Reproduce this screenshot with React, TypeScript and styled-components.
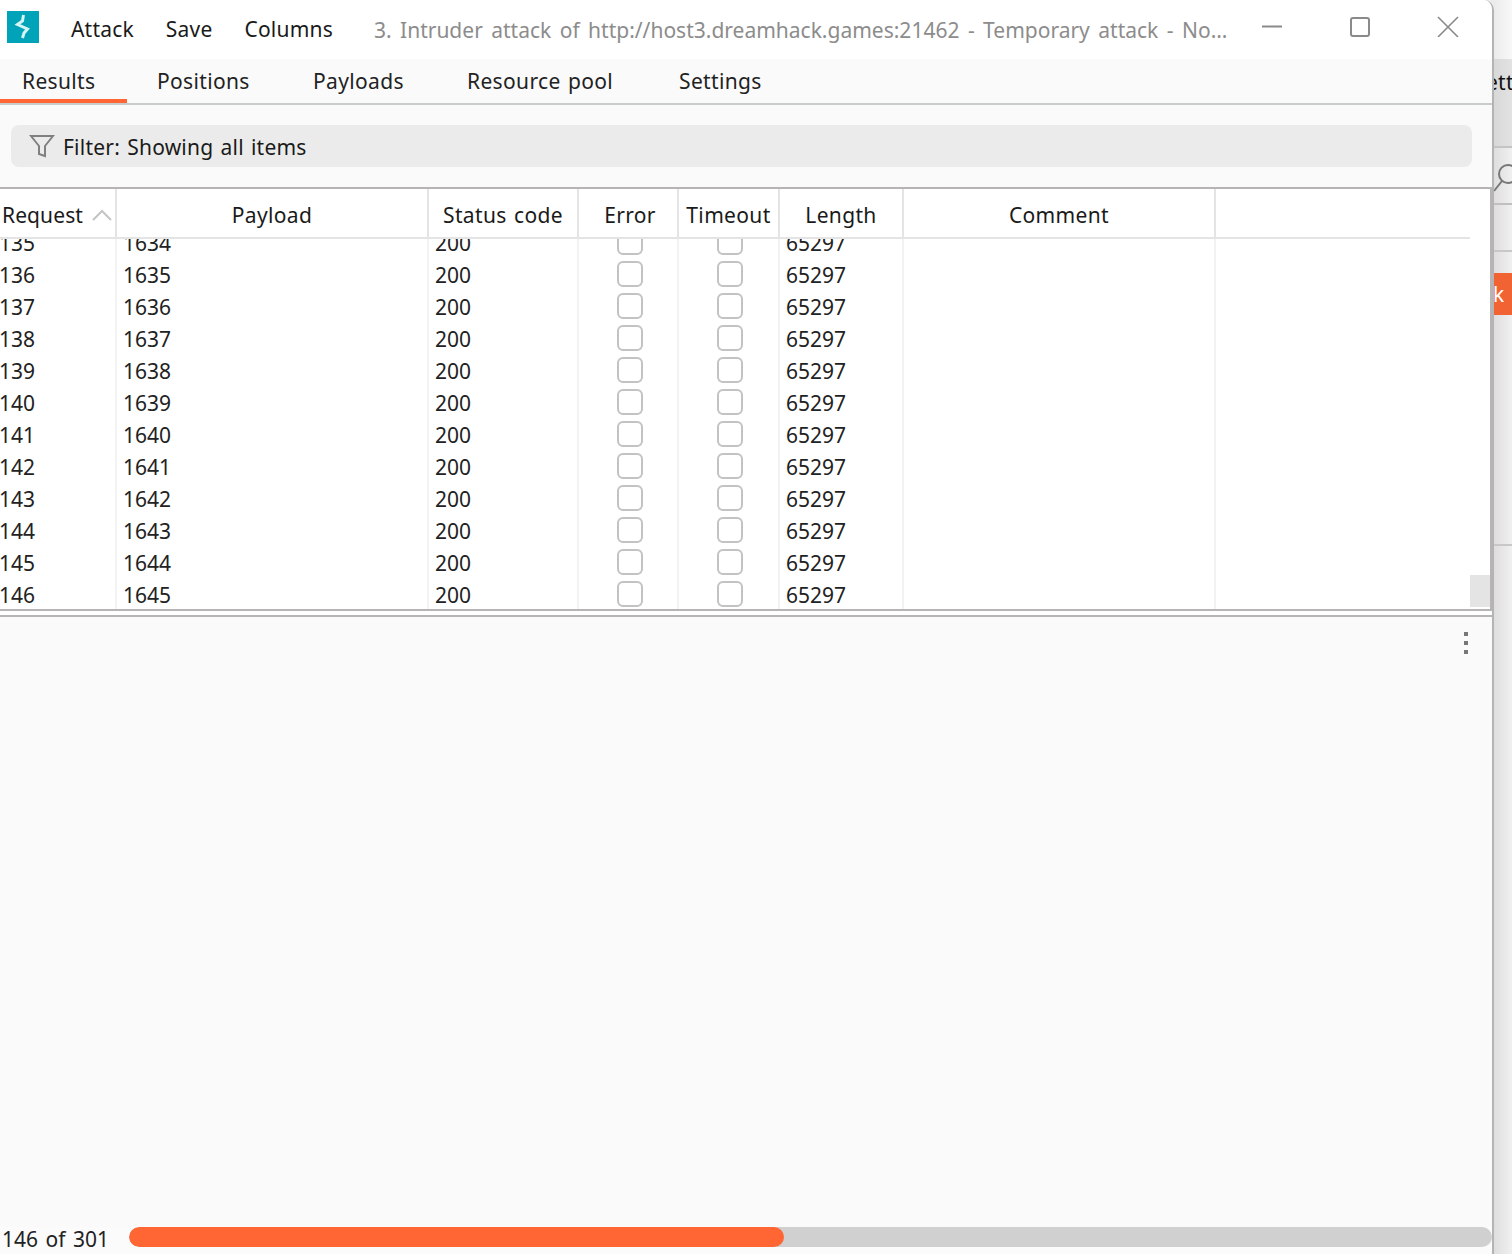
import React from "react";
import styled, { createGlobalStyle } from "styled-components";

const Global = createGlobalStyle`
  html, body { margin: 0; padding: 0; height: 100%; background: #ececec; }
  #root { height: 100%; }
  * { box-sizing: border-box; }
`;

const Page = styled.div`
  width: 1512px;
  height: 1254px;
  overflow: hidden;
  display: flex;
  font-family: "Noto Sans", "Noto Sans CJK KR", sans-serif;
  font-size: 21px;
  letter-spacing: 0.35px;
  word-spacing: 1.5px;
  color: #1a1a1a;
`;

const Win = styled.div`
  width: 1494px;
  height: 1254px;
  flex: none;
  display: flex;
  flex-direction: column;
  background: #fafafa;
  border-right: 2px solid #b4b4b4;
  border-top-right-radius: 10px;
  overflow: hidden;
`;

const TitleBar = styled.div`
  height: 59px;
  flex: none;
  background: #fff;
  display: flex;
  align-items: center;
`;

const Logo = styled.svg`
  width: 32px;
  height: 32px;
  margin: 0 0 5px 7px;
  flex: none;
`;

const MenuItem = styled.span<{ $ml: number }>`
  margin-left: ${(p) => p.$ml}px;
  flex: none;
  line-height: 59px;
  letter-spacing: 0.2px;
`;

const Title = styled.span`
  margin-left: 41px;
  width: 855px;
  flex: none;
  color: #8c8c8c;
  letter-spacing: 0;
  word-spacing: 3px;
  white-space: nowrap;
  overflow: hidden;
  text-overflow: ellipsis;
`;

const WinBtn = styled.svg<{ $ml: number }>`
  width: 24px;
  height: 24px;
  flex: none;
  margin-left: ${(p) => p.$ml}px;
  margin-bottom: 10px;
`;

const Tabs = styled.div`
  height: 46px;
  flex: none;
  display: flex;
  background: #fafafa;
  border-bottom: 2px solid #c8cccc;
`;

const Tab = styled.div<{ $w: number; $pl: number; $active?: boolean }>`
  width: ${(p) => p.$w}px;
  height: 44px;
  flex: none;
  padding-left: ${(p) => p.$pl}px;
  line-height: 44px;
  color: #222;
  border-bottom: 4px solid ${(p) => (p.$active ? "#ff6633" : "transparent")};
`;

const FilterArea = styled.div`
  height: 82px;
  flex: none;
  padding: 20px 20px 0 11px;
`;

const Filter = styled.div`
  height: 42px;
  background: #ebebeb;
  border-radius: 8px;
  display: flex;
  align-items: center;
  padding-left: 18px;
  gap: 8px;
  letter-spacing: 0.22px;
`;

const FilterText = styled.span`
  padding-top: 2px;
`;

const TableWrap = styled.div`
  height: 424px;
  flex: none;
  background: #fff;
  border-top: 2px solid #b8b4b4;
  border-bottom: 2px solid #b8b4b4;
  border-right: 2px solid #b8b4b4;
  display: flex;
  flex-direction: column;
  overflow: hidden;
`;

const HeadRow = styled.div`
  height: 50px;
  flex: none;
  display: flex;
  width: 1470px;
  border-bottom: 2px solid #e4e4e4;
`;

const HeadCell = styled.div<{ $w: number; $pl?: number }>`
  width: ${(p) => p.$w}px;
  flex: none;
  border-right: 2px solid #e4e4e4;
  display: flex;
  align-items: center;
  justify-content: center;
  white-space: nowrap;
  padding-top: 4px;
  padding-left: ${(p) => p.$pl ?? 0}px;
`;

const HeadLeft = styled(HeadCell)`
  justify-content: flex-start;
  padding-left: 2px;
  gap: 9px;
  letter-spacing: 0.1px;
`;

const Body = styled.div`
  flex: 1;
  display: flex;
  overflow: hidden;
`;

const RowList = styled.div`
  width: 1470px;
  flex: none;
  margin-top: -12px;
`;

const Row = styled.div`
  height: 32px;
  display: flex;
`;

const Cell = styled.div<{ $w: number; $pl: number; $last?: boolean }>`
  width: ${(p) => p.$w}px;
  flex: none;
  padding-left: ${(p) => p.$pl}px;
  line-height: 32px;
  letter-spacing: 0;
  border-right: 2px solid ${(p) => (p.$last ? "transparent" : "#f2f2f2")};
  color: #222;
`;

const FirstCell = styled(Cell)`
  text-indent: -1px;
`;

const BoxCell = styled.div<{ $w: number; $pl: number }>`
  width: ${(p) => p.$w}px;
  flex: none;
  display: flex;
  align-items: center;
  justify-content: center;
  padding: 0 0 2px ${(p) => p.$pl}px;
  border-right: 2px solid #f2f2f2;
`;

const Check = styled.div`
  width: 26px;
  height: 26px;
  border: 2px solid #c2c2c2;
  border-radius: 6px;
  background: #fff;
`;

const Scroll = styled.div`
  width: 20px;
  flex: none;
  display: flex;
  flex-direction: column;
  justify-content: flex-end;
  padding-bottom: 2px;
`;

const Thumb = styled.div`
  height: 32px;
  background: #e4e4e4;
`;

const Spacer = styled.div`
  height: 4px;
  flex: none;
  background: #fff;
`;

const Lower = styled.div`
  flex: 1;
  background: #fafafa;
  border-top: 2px solid #b8b4b4;
  display: flex;
  justify-content: flex-end;
  align-items: flex-start;
  padding: 14px 22px 0 0;
`;

const Kebab = styled.svg`
  width: 8px;
  height: 24px;
`;

const Status = styled.div`
  height: 27px;
  flex: none;
  background: #fbfbfb;
  display: flex;
  align-items: flex-start;
  padding-left: 2px;
`;

const StatusText = styled.span`
  width: 127px;
  flex: none;
  line-height: 26px;
  margin-top: -1px;
  letter-spacing: 0;
  word-spacing: 2px;
  color: #222;
`;

const Track = styled.div`
  width: 1363px;
  height: 20px;
  flex: none;
  background: #d0d0d0;
  border-radius: 10px;
  overflow: hidden;
`;

const Fill = styled.div`
  height: 100%;
  background: #ff6633;
  border-radius: 10px;
`;

const Side = styled.div`
  flex: 1;
  height: 1254px;
  background: linear-gradient(to right, #dedede, #f0f0f0);
  display: flex;
  flex-direction: column;
  overflow: hidden;
`;

const SideTop = styled.div`
  height: 59px;
  flex: none;
  background: linear-gradient(to right, #ebebeb, #f8f8f8);
`;

const SideTab = styled.div`
  height: 89px;
  flex: none;
  background: linear-gradient(to right, #d8d8d8, #e2e2e2);
  border-bottom: 2px solid #c4c4c4;
  padding-top: 8px;
  line-height: 30px;
  white-space: nowrap;
  color: #111;
  text-indent: -20px;
`;

const SideSearch = styled.div`
  height: 57px;
  flex: none;
  border-bottom: 2px solid #c0c0c0;
  padding-top: 16px;
`;

const SideGap = styled.div<{ $h: number }>`
  height: ${(p) => p.$h}px;
  flex: none;
  border-bottom: 2px solid #c8c8c8;
`;

const SideGapPlain = styled.div`
  height: 21px;
  flex: none;
`;

const SideOrange = styled.div`
  height: 42px;
  flex: none;
  background: #f26334;
  color: #fff;
  line-height: 42px;
  text-indent: -1px;
  overflow: hidden;
`;

const cols = [117, 312, 150, 100, 101, 124, 312];
const rows = Array.from({ length: 12 }, (_, i) => i);

export default function App() {
  return (
    <Page>
      <Global />
      <Win>
        <TitleBar>
          <Logo viewBox="0 0 32 32">
            <rect width="32" height="32" fill="#00a3b8" />
            <path d="M16.5 4 L15.5 10 L10.5 13.5 L20.5 18 L17 22 L15.5 27" fill="none" stroke="#d6f4f4" strokeWidth="3" />
          </Logo>
          <MenuItem $ml={32}>Attack</MenuItem>
          <MenuItem $ml={32}>Save</MenuItem>
          <MenuItem $ml={32}>Columns</MenuItem>
          <Title>3. Intruder attack of http://host3.dreamhack.games:21462 - Temporary attack - Not saved to project file</Title>
          <WinBtn $ml={32} viewBox="0 0 24 24">
            <path d="M1 13.5 H21" stroke="#8a8a8a" strokeWidth="2" />
          </WinBtn>
          <WinBtn $ml={64} viewBox="0 0 24 24">
            <rect x="2" y="5" width="18" height="18" rx="2" fill="none" stroke="#8a8a8a" strokeWidth="2" />
          </WinBtn>
          <WinBtn $ml={64} viewBox="0 0 24 24">
            <path d="M1 4 L21 24 M21 4 L1 24" stroke="#8a8a8a" strokeWidth="1.6" />
          </WinBtn>
        </TitleBar>
        <Tabs>
          <Tab $w={127} $pl={22} $active>Results</Tab>
          <Tab $w={156} $pl={30}>Positions</Tab>
          <Tab $w={154} $pl={30}>Payloads</Tab>
          <Tab $w={212} $pl={30}>Resource pool</Tab>
          <Tab $w={146} $pl={30}>Settings</Tab>
        </Tabs>
        <FilterArea>
          <Filter>
            <svg width="26" height="26" viewBox="0 0 26 26">
              <path d="M2 3 H24 L16 13 V23 L10 21 V13 Z" fill="none" stroke="#808080" strokeWidth="2" />
            </svg>
            <FilterText>Filter: Showing all items</FilterText>
          </Filter>
        </FilterArea>
        <TableWrap>
          <HeadRow>
            <HeadLeft $w={cols[0]}>
              Request
              <svg width="20" height="12" viewBox="0 0 20 12">
                <path d="M1 11 L10 2 L19 11" fill="none" stroke="#c4c4c4" strokeWidth="2" />
              </svg>
            </HeadLeft>
            <HeadCell $w={cols[1]}>Payload</HeadCell>
            <HeadCell $w={cols[2]}>Status code</HeadCell>
            <HeadCell $w={cols[3]} $pl={4}>Error</HeadCell>
            <HeadCell $w={cols[4]}>Timeout</HeadCell>
            <HeadCell $w={cols[5]}>Length</HeadCell>
            <HeadCell $w={cols[6]}>Comment</HeadCell>
          </HeadRow>
          <Body>
            <RowList>
              {rows.map((i) => (
                <Row key={i}>
                  <FirstCell $w={cols[0]} $pl={0}>{135 + i}</FirstCell>
                  <Cell $w={cols[1]} $pl={6}>{1634 + i}</Cell>
                  <Cell $w={cols[2]} $pl={6}>200</Cell>
                  <BoxCell $w={cols[3]} $pl={4}><Check /></BoxCell>
                  <BoxCell $w={cols[4]} $pl={2}><Check /></BoxCell>
                  <Cell $w={cols[5]} $pl={6}>65297</Cell>
                  <Cell $w={cols[6]} $pl={0} />
                  <Cell $w={254} $pl={0} $last />
                </Row>
              ))}
            </RowList>
            <Scroll><Thumb /></Scroll>
          </Body>
        </TableWrap>
        <Spacer />
        <Lower>
          <Kebab viewBox="0 0 8 24">
            <rect x="2" y="1" width="4" height="4" fill="#777" />
            <rect x="2" y="10" width="4" height="4" fill="#777" />
            <rect x="2" y="19" width="4" height="4" fill="#777" />
          </Kebab>
        </Lower>
        <Status>
          <StatusText>146 of 301</StatusText>
          <Track>
            <Fill style={{ width: `${(655 / 1363) * 100}%` }} />
          </Track>
        </Status>
      </Win>
      <Side>
        <SideTop />
        <SideTab>Settings</SideTab>
        <SideSearch>
          <svg width="18" height="28" viewBox="0 0 18 28">
            <circle cx="14" cy="10" r="9" fill="none" stroke="#777" strokeWidth="2" />
            <path d="M0 27 L8 17" stroke="#777" strokeWidth="2" />
          </svg>
        </SideSearch>
        <SideGap $h={47} />
        <SideGapPlain />
        <SideOrange>k</SideOrange>
        <SideGap $h={231} />
      </Side>
    </Page>
  );
}
